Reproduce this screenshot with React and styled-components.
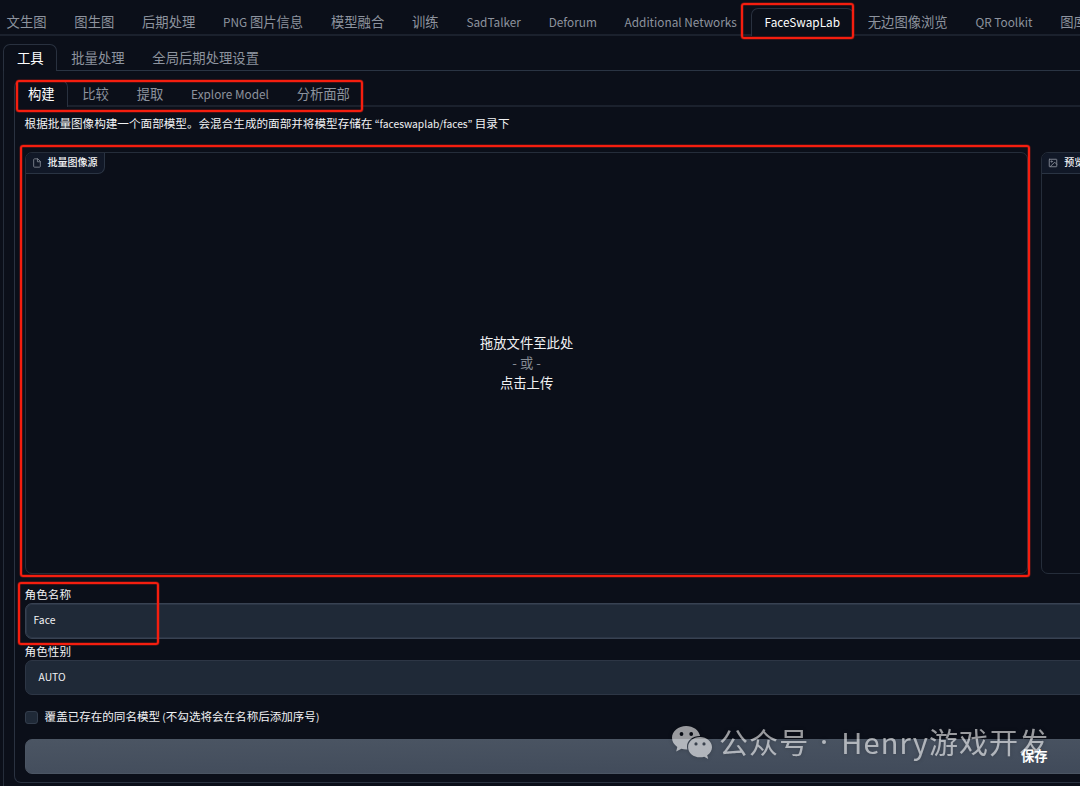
import styled, { createGlobalStyle } from "styled-components";

const GlobalStyle = createGlobalStyle`
    * {
        box-sizing: border-box;
    }
    body {
        margin: 0;
        background: #0b0f19;
        font-family: "Noto Sans CJK SC", "Noto Sans", sans-serif;
        overflow: hidden;
    }
    button {
        font-family: inherit;
    }
`

const Screen = styled.div`
    position: relative;
    width: 1080px;
    height: 786px;
    overflow: hidden;
    background: #0b0f19;
    color: #f1f2f4;
`

// the webui is wider than the window, so the right side runs off screen
const Page = styled.div`
    width: 2066px;
    padding-top: 8px;
`

const TabBar = styled.div`
    display: flex;
    height: ${({ $height }) => $height}px;
    margin: 0 0 ${({ $gap }) => $gap || 0}px ${({ $left }) => $left || 0}px;
    box-shadow: inset 0 -${({ $line }) => $line}px 0 ${({ $color }) => $color};
`

const Tab = styled.button`
    flex: none;
    padding: 0 12.88px 1px;
    border: 1px solid transparent;
    border-bottom: none;
    border-radius: 7px 7px 0 0;
    background: transparent;
    color: #8d939e;
    font-size: 13.33px;
    line-height: 20px;
    white-space: nowrap;
    ${({ $selected }) => $selected && `
        border-color: #29313f;
        background: #0b0f19;
        color: #fff;
    `}
`

// latin letters of the CJK face are oversized, and its KR cut has narrow quotes
const Latin = styled.span`
    font-family: "Noto Sans CJK KR", sans-serif;
    font-size: 0.886em;
    white-space: pre;
`

const OuterPanel = styled.div`
    height: 730px;
    margin-left: 3px;
    padding: 9px 10px 0;
    border-left: 1px solid #252d3a;
`

const InnerPanel = styled.div`
    height: 676px;
    padding: 7px 9px 0 9.6px;
    border: 1px solid #2a3240;
    border-top: none;
    border-radius: 0 0 7px 7px;
`

const Description = styled.p`
    margin: 0;
    height: 38px;
    font-size: 11.6px;
    line-height: 18px;
`

const Blocks = styled.div`
    display: flex;
    gap: 13px;
    height: 422px;
`

const Block = styled.div`
    flex: none;
    display: flex;
    flex-direction: column;
    width: 1003px;
    border: 1px solid #252d3a;
    border-radius: 7px;
    overflow: hidden;
`

const BlockLabel = styled.div`
    display: flex;
    align-items: center;
    align-self: flex-start;
    gap: 6px;
    height: 21px;
    padding: 0 6px 1px;
    border: solid #2a3443;
    border-width: 0 1px 1px 0;
    border-radius: 0 0 7px 0;
    background: #111827;
    font-size: 10px;
    font-weight: 500;
    ${({ $wide }) => $wide && "align-self: stretch; border-radius: 0; padding-left: 6.6px;"}
    svg {
        flex: none;
        color: #858b96;
    }
    span {
        padding-bottom: 2px;
    }
`

const DropText = styled.div`
    flex: 1;
    display: flex;
    flex-direction: column;
    align-items: center;
    justify-content: center;
    padding: 0 0 22px 1px;
    font-size: 13.33px;
    line-height: 20px;
`

const Or = styled.span`
    color: #858b94;
`

const FieldLabel = styled.div`
    height: ${({ $height }) => $height}px;
    padding-top: ${({ $top }) => $top}px;
    font-size: 11.6px;
    line-height: 16px;
`

const Field = styled.div`
    display: flex;
    align-items: center;
    height: ${({ $height }) => $height}px;
    padding: 0 0 3px ${({ $indent }) => $indent}px;
    border: 1px solid ${({ $active }) => $active ? "#384252" : "#2d3645"};
    border-radius: 7px;
    background: #1f2937;
    box-shadow: ${({ $active }) => $active ? "inset 0 0 0 1px #2b3545" : "none"};
    font-size: 11.6px;
`

const CheckRow = styled.label`
    display: flex;
    align-items: center;
    gap: 7px;
    height: 44px;
    padding-bottom: 2px;
    font-size: 11.55px;
`

const Checkbox = styled.span`
    width: 13px;
    height: 13px;
    margin-top: 2px;
    border: 1px solid #333d4c;
    border-radius: 3px;
    background: #1f2937;
`

const SaveButton = styled.button`
    display: block;
    width: 100%;
    height: 35px;
    padding: 0 2px 2px 0;
    border: 1px solid #4b5563;
    border-radius: 7px;
    background: linear-gradient(to bottom right, #4b5563, #3d4757);
    color: #fff;
    font-size: 13.33px;
    font-weight: 700;
    span {
        position: relative;
        z-index: 2;
    }
`

const Mark = styled.div`
    position: absolute;
    z-index: 3;
    left: ${({ $x }) => $x}px;
    top: ${({ $y }) => $y}px;
    width: ${({ $w }) => $w}px;
    height: ${({ $h }) => $h}px;
    border: 2px solid #f51e0f;
    box-shadow: 0 0 0 0.5px rgba(245, 30, 15, 0.45), inset 0 0 0 0.5px rgba(245, 30, 15, 0.45);
    border-radius: 3px;
`

const Watermark = styled.div`
    position: absolute;
    z-index: 1;
    left: 672px;
    top: 720px;
    display: flex;
    align-items: center;
    height: 42px;
    color: #fff;
    opacity: 0.58;
    font-size: 29px;
    letter-spacing: 1.1px;
    white-space: nowrap;
    filter: drop-shadow(0 0 2px rgba(0, 0, 0, 0.4));
    svg {
        margin: 2px 7px 0 0;
    }
`

const Dot = styled.span`
    display: flex;
    justify-content: center;
    width: 32px;
    padding-right: 2px;
    &::before {
        content: "";
        width: 4px;
        height: 4px;
        margin-top: 1px;
        border-radius: 50%;
        background: currentColor;
    }
`

const FileIcon = () => (
    <svg width="10" height="10" viewBox="0 0 24 24" fill="none" stroke="currentColor" strokeWidth="2" strokeLinecap="round" strokeLinejoin="round">
        <path d="M13 2H6a2 2 0 0 0-2 2v16a2 2 0 0 0 2 2h12a2 2 0 0 0 2-2V9z" />
        <path d="M13 2v7h7" />
    </svg>
)

const ImageIcon = () => (
    <svg width="10" height="10" viewBox="0 0 24 24" fill="none" stroke="currentColor" strokeWidth="2.2" strokeLinecap="round" strokeLinejoin="round">
        <rect x="3" y="3" width="18" height="18" rx="1" />
        <circle cx="8.5" cy="8.5" r="1.5" />
        <path d="M21 15l-5-5L5 21" />
    </svg>
)

const WechatIcon = () => (
    <svg width="40" height="33" viewBox="0 0 40 33" fill="currentColor">
        <path
            fillRule="evenodd"
            d="M14.2 0C6.3 0 0 5.2 0 11.8c0 3.7 2 7 5.300 9.200L4.200 25.600l5.200-2.800c1.600.4 3.200.7 4.900.7h1.100c-.3-1-.4-1.900-.4-2.900 0-6 5.700-10.500 12.700-10.500h.4C27 4.300 21.200 0 14.200 0ZM9.500 6.100a1.900 1.900 0 1 1 0 3.800 1.900 1.900 0 0 1 0-3.800ZM19.200 6.100a1.900 1.900 0 1 1 0 3.800 1.900 1.900 0 0 1 0-3.800Z"
        />
        <path
            fillRule="evenodd"
            d="M28 11c-6.600 0-11.900 4.500-11.900 10.200S21.400 31.300 28 31.300c1.500 0 2.900-.2 4.200-.6l4 2.200-1-3.700c2.900-1.900 4.800-4.800 4.800-8C40 15.500 34.600 11 28 11ZM24 16.300a1.600 1.600 0 1 1 0 3.200 1.600 1.600 0 0 1 0-3.200ZM32 16.300a1.600 1.600 0 1 1 0 3.200 1.600 1.600 0 0 1 0-3.200Z"
        />
    </svg>
)

const mainTabs = [
    { text: "文生图" },
    { text: "图生图" },
    { text: "后期处理" },
    { latin: "PNG ", text: "图片信息" },
    { text: "模型融合" },
    { text: "训练" },
    { latin: "SadTalker" },
    { latin: "Deforum" },
    { latin: "Additional Networks" },
    { latin: "FaceSwapLab", selected: true },
    { text: "无边图像浏览" },
    { latin: "QR Toolkit" },
    { text: "图库浏览器" },
];

const toolTabs = [
    { text: "工具", selected: true },
    { text: "批量处理" },
    { text: "全局后期处理设置" },
];

const faceTabs = [
    { text: "构建", selected: true },
    { text: "比较" },
    { text: "提取" },
    { latin: "Explore Model" },
    { text: "分析面部" },
];

const Tabs = ({ items, ...bar }) => (
    <TabBar {...bar}>
        {items.map(({ latin, text, selected }) => (
            <Tab key={latin || text} $selected={selected}>
                {latin && <Latin>{latin}</Latin>}
                {text}
            </Tab>
        ))}
    </TabBar>
)

const App = () => {
    return (
        <Screen>
            <GlobalStyle />
            <Page>
                <Tabs items={mainTabs} $height={28} $left={-7.3} $gap={8} $line={2} $color="#1b212d" />
                <Tabs items={toolTabs} $height={27} $left={3} $line={1} $color="#2a3443" />
                <OuterPanel>
                    <Tabs items={faceTabs} $height={27} $line={2} $color="#1b212d" />
                    <InnerPanel>
                        <Description>
                            根据批量图像构建一个面部模型。会混合生成的面部并将模型存储在
                            <Latin> “faceswaplab/faces” </Latin>
                            目录下
                        </Description>
                        <Blocks>
                            <Block>
                                <BlockLabel><FileIcon /><span>批量图像源</span></BlockLabel>
                                <DropText>
                                    拖放文件至此处
                                    <Or>- 或 -</Or>
                                    点击上传
                                </DropText>
                            </Block>
                            <Block>
                                <BlockLabel $wide><ImageIcon /><span>预览</span></BlockLabel>
                            </Block>
                        </Blocks>
                        <FieldLabel $height={29} $top={12}>角色名称</FieldLabel>
                        <Field $height={36} $indent={8} $active><Latin>Face</Latin></Field>
                        <FieldLabel $height={21} $top={4}>角色性别</FieldLabel>
                        <Field $height={35} $indent={13}><Latin>AUTO</Latin></Field>
                        <CheckRow>
                            <Checkbox />
                            <span>覆盖已存在的同名模型<Latin> (</Latin>不勾选将会在名称后添加序号<Latin>)</Latin></span>
                        </CheckRow>
                        <SaveButton><span>保存</span></SaveButton>
                    </InnerPanel>
                </OuterPanel>
            </Page>
            <Watermark><WechatIcon />公众号<Dot />Henry游戏开发</Watermark>
            <Mark $x={741} $y={3} $w={113} $h={36} />
            <Mark $x={15.5} $y={79.5} $w={347} $h={32} />
            <Mark $x={19.5} $y={145} $w={1010} $h={431.5} />
            <Mark $x={17.5} $y={582} $w={141.5} $h={63} />
        </Screen>
    )
}

export default App;
